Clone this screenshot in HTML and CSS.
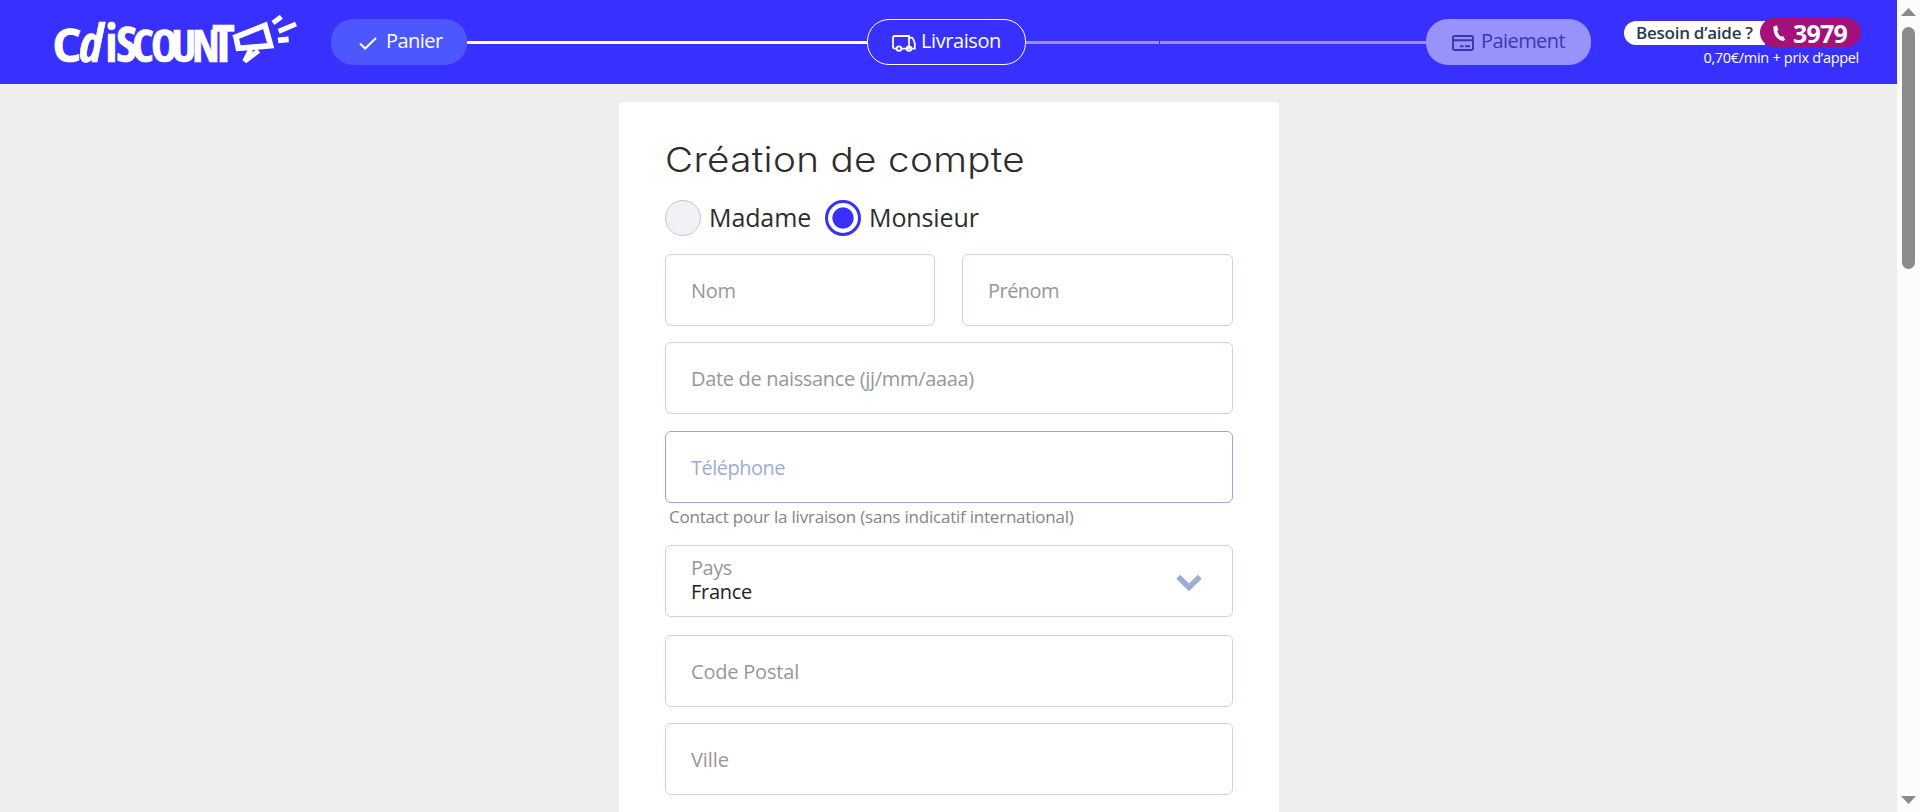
FILE: index.html
```html
<!DOCTYPE html>
<html lang="fr">
<head>
<meta charset="utf-8">
<title>Création de compte</title>
<link rel="stylesheet" href="styles.css">
</head>
<body>
<div class="page">
  <header class="header">
    <svg class="logo" viewBox="0 0 810 252" role="img" aria-label="Cdiscount">
      <text class="logo-letters" y="187"><tspan class="wide" x="37" font-size="138">C</tspan><tspan class="mid" x="118" font-size="154">d</tspan><tspan x="196" font-size="154">i</tspan><tspan x="229" font-size="142">S</tspan><tspan x="276" font-size="136">C</tspan><tspan x="333" font-size="136">O</tspan><tspan x="394" font-size="134">U</tspan><tspan x="456" font-size="134">N</tspan><tspan x="517" font-size="158">T</tspan></text>
      <g class="logo-horn">
        <path d="M580 114 675 76 692 137 595 145 588 111" stroke-width="17"/>
        <path d="M632 148 614 184 656 152" stroke-width="15"/>
        <path d="M699 69 724 50" stroke-width="15"/>
        <path d="M716 94 768 72" stroke-width="15"/>
        <path d="M714 121 746 118" stroke-width="17"/>
      </g>
    </svg>
    <nav class="steps">
      <div class="step step-done">
        <svg class="icon-check" viewBox="0 0 18 13"><path d="M1 6.5 6.2 11.5 17 1"/></svg>
        <span>Panier</span>
      </div>
      <div class="line line-done"></div>
      <div class="step step-current">
        <svg class="icon-truck" viewBox="0 0 24 17"><path d="M4 13.6H3Q1 13.6 1 11.6V2.8Q1 1 3 1H17V13.6H9.8M17 2.6H19Q20.8 2.6 21.3 4.2L22.8 8.5V13.6H20"/><circle cx="7" cy="13.6" r="2.3"/><circle cx="17" cy="13.6" r="2.3"/></svg>
        <span>Livraison</span>
      </div>
      <div class="line line-next"></div>
      <div class="line line-last"></div>
      <div class="step step-next">
        <svg class="icon-card" viewBox="0 0 22 16"><rect x="1" y="1" width="20" height="14" rx="1.5"/><path d="M1 5.3H21M8 11.3H11.5M13 11.3H18"/></svg>
        <span>Paiement</span>
      </div>
    </nav>
    <div class="help">
      <div class="help-row">
        <span class="help-label">Besoin d’aide ?</span>
        <span class="help-number">
          <svg class="icon-phone" viewBox="0 0 13 16"><path d="M.6 1.4 3.8.2 5.4 4.6 4.2 6.2Q5.2 9.4 7.6 11.4L10.2 11.2 12.2 14.8 10.2 15.9Q5 15.4 2.2 10.6 0 6.4 .6 1.4Z"/></svg>
          <span>3979</span>
        </span>
      </div>
      <div class="help-price">0,70€/min + prix d’appel</div>
    </div>
  </header>
  <main class="card">
    <h1 class="title">Création de compte</h1>
    <div class="civility">
      <label class="radio"><i class="dot"></i><span class="madame">Madame</span></label>
      <label class="radio"><i class="dot dot-on"></i><span>Monsieur</span></label>
    </div>
    <div class="pair">
      <div class="field"><span class="nom">Nom</span></div>
      <div class="field"><span class="prenom">Prénom</span></div>
    </div>
    <div class="field date"><span>Date de naissance (jj/mm/aaaa)</span></div>
    <div class="field phone"><span>Téléphone</span></div>
    <p class="hint">Contact pour la livraison (sans indicatif international)</p>
    <div class="field country">
      <div class="stack"><span class="country-label">Pays</span><span class="country-value">France</span></div>
      <svg class="chevron" viewBox="0 0 26 18"><path d="M2.2 2.7 13 13.4 23.8 2.7"/></svg>
    </div>
    <div class="field zip"><span>Code Postal</span></div>
    <div class="field city"><span>Ville</span></div>
  </main>
</div>
<aside class="scrollbar">
  <i class="arrow arrow-up"></i>
  <i class="thumb"></i>
  <i class="arrow arrow-down"></i>
</aside>
</body>
</html>
```
FILE: styles.css
```css
* { box-sizing: border-box; }
body {
  margin: 0;
  height: 812px;
  display: flex;
  overflow: hidden;
  background: #eee;
  color: #2d2d2d;
  font-family: "Open Sans", "Noto Sans", sans-serif;
  font-size: 20px;
}
svg { display: block; flex: none; fill: none; }
span { white-space: nowrap; }
.page { width: 1897px; height: 812px; overflow: hidden; }

.header {
  height: 84px;
  display: flex;
  align-items: flex-start;
  padding-left: 40px;
  background: #3730ff;
}
.logo { width: 270px; height: 84px; }
.logo-letters { fill: #fff; stroke: #fff; stroke-width: 2; stroke-linejoin: round; font-family: "Open Sans", sans-serif; font-weight: 700; font-stretch: 75%; }
.logo-letters .wide { font-stretch: 100%; font-weight: 700; }
.logo-letters .mid { font-stretch: 87.5%; font-style: italic; }
.logo-horn { stroke: #fff; }

.steps { display: flex; align-items: center; width: 1260px; margin: 19px 0 0 21px; }
.step {
  height: 46px;
  flex: none;
  display: flex;
  align-items: center;
  border-radius: 22px;
  color: #fff;
  line-height: 42px;
}
.step span { padding-bottom: 2px; }
.step-done { width: 136px; padding-left: 28px; background: #4c57ff; letter-spacing: -.55px; }
.step-current { width: 159px; padding-left: 24px; border: 1px solid #fff; letter-spacing: -.41px; }
.step-next { width: 165px; padding-left: 26px; background: #9793fb; color: #3a36b0; letter-spacing: -.57px; }
.icon-check { width: 18px; height: 13px; margin: 2px 9px 0 0; stroke: #fff; stroke-width: 2; }
.icon-truck { width: 24px; height: 17px; margin: 3px 5px 0 0; stroke: #fff; stroke-width: 1.8; }
.icon-card { width: 22px; height: 16px; margin: 2px 7px 0 0; stroke: #3a36b0; stroke-width: 1.9; }
.line { height: 3px; margin-top: 1px; }
.line-done { width: 400px; background: #fff; }
.line-next { width: 133px; margin-right: 1px; background: #9793fb; }
.line-last { width: 266px; background: #9793fb; }

.help { width: 237px; margin: 18px 0 0 33px; }
.help-row { display: flex; align-items: center; }
.help-label {
  width: 141px;
  height: 24px;
  padding-left: 12px;
  border-radius: 12px 0 0 12px;
  background: #fff;
  color: #2a3a4d;
  font-size: 17px;
  font-weight: 650;
  line-height: 23px;
  letter-spacing: -.25px;
}
.help-number {
  width: 101px;
  height: 29px;
  margin: 0 -5px;
  display: flex;
  align-items: center;
  gap: 7px;
  padding-left: 13px;
  border-radius: 15px;
  background: #a6107c;
  color: #fff;
  font-size: 25px;
  font-weight: 700;
  line-height: 30px;
  letter-spacing: -.8px;
}
.icon-phone { width: 13px; height: 16px; fill: #fff; }
.help-price {
  width: 235px;
  margin-top: 1px;
  color: #fff;
  font-size: 14.5px;
  line-height: 20px;
  letter-spacing: -.3px;
  text-align: right;
}

.card {
  width: 660px;
  height: 740px;
  margin: 18px 0 0 619px;
  padding: 33px 46px 0;
  border-radius: 4px;
  background: #fff;
}
.title {
  height: 50px;
  margin: 0;
  font-family: Inter, "Open Sans", sans-serif;
  font-size: 34.5px;
  font-weight: 300;
  line-height: 50px;
  letter-spacing: .3px;
  white-space: nowrap;
  transform: scaleX(1.12);
  transform-origin: left;
}
.civility { display: flex; gap: 16px; margin-top: 15px; font-size: 25px; letter-spacing: -.1px; }
.radio { display: flex; align-items: center; gap: 8px; height: 36px; line-height: 34px; }
.radio span { padding-bottom: 3px; }
.madame { width: 100px; }
.dot { width: 36px; height: 36px; border: 1px solid #bcc7d6; border-radius: 50%; background: #f1f2f5; }
.dot-on { border: 3px solid #3730ff; background: radial-gradient(circle, #3730ff 10.2px, #fff 11px); }

.pair { display: grid; grid-template-columns: 270px 271px; gap: 27px; margin-top: 18px; }
.field {
  height: 72px;
  display: flex;
  align-items: center;
  padding: 2px 0 0 25px;
  border: 1px solid #c8d4e6;
  border-radius: 6px;
  color: #979797;
  line-height: 28px;
}
.nom { letter-spacing: -.3px; }
.prenom { letter-spacing: -.54px; }
.date { margin-top: 16px; letter-spacing: -.33px; }
.phone { margin-top: 17px; border-color: #96a9ce; color: #9badd1; letter-spacing: -.5px; }
.hint { margin: 1px 0 0 4px; height: 26px; color: #858585; font-size: 17px; line-height: 26px; letter-spacing: -.22px; white-space: nowrap; }
.country { margin-top: 15px; justify-content: space-between; padding: 0 30px 2px 25px; }
.stack { display: flex; flex-direction: column; line-height: 24px; }
.country-label { letter-spacing: -.43px; }
.country-value { color: #222; letter-spacing: -.28px; }
.chevron { width: 26px; height: 18px; margin-top: 6px; stroke: #9badd1; stroke-width: 5.5; }
.zip { margin-top: 18px; letter-spacing: -.2px; }
.city { margin-top: 16px; letter-spacing: -.06px; }

.scrollbar {
  width: 23px;
  height: 812px;
  padding: 8px 4px;
  display: flex;
  flex-direction: column;
  align-items: flex-start;
  background: #fcfcfc;
}
.arrow { width: 15px; height: 8px; background: #8b8b8b; }
.arrow-up { clip-path: polygon(50% 0, 100% 100%, 0 100%); }
.arrow-down { margin-top: auto; clip-path: polygon(0 0, 100% 0, 50% 100%); }
.thumb { width: 13px; height: 242px; margin: 11px 0 0 1px; border-radius: 7px; background: #8b8b8b; }
```
